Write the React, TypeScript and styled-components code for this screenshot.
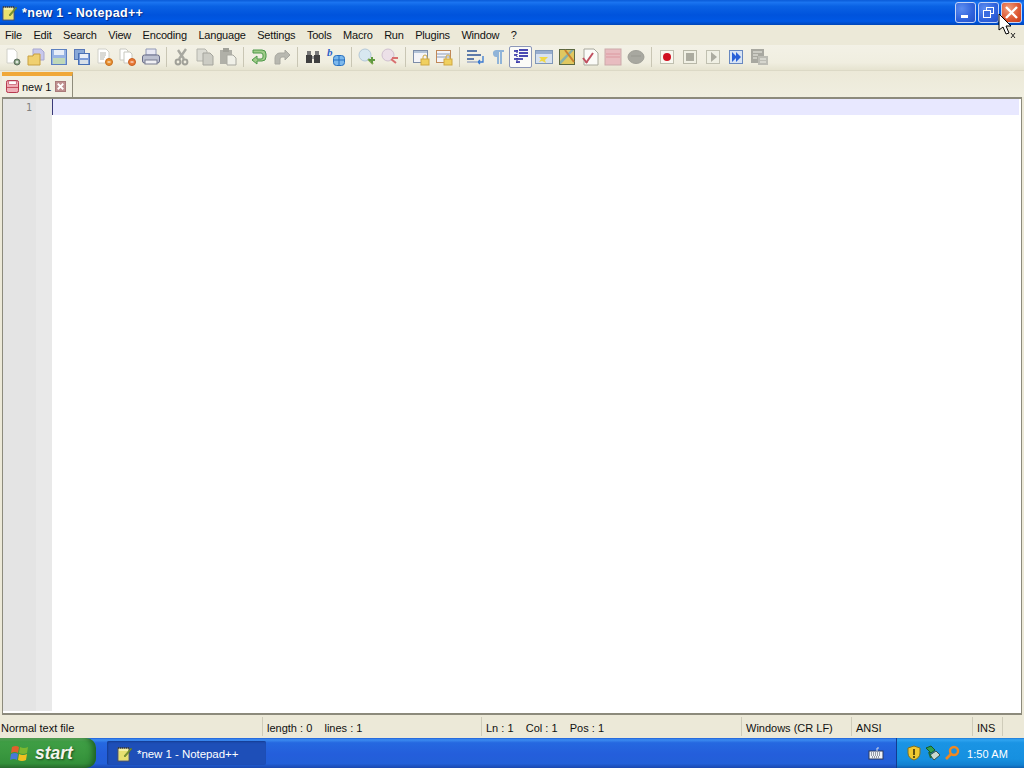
import React from "react";
import styled, { createGlobalStyle } from "styled-components";

const GlobalStyle = createGlobalStyle`
  html, body {
    margin: 0;
    padding: 0;
    height: 768px;
    overflow: hidden;
    background: #ece9d8;
  }
  #root { height: 768px; }
  * { box-sizing: border-box; }
`;

const Screen = styled.div`
  width: 1024px;
  height: 768px;
  position: relative;
  display: flex;
  flex-direction: column;
  font-family: "Liberation Sans", Arial, sans-serif;
  font-size: 11px;
  color: #111;
  background: #ece9d8;
  overflow: hidden;
`;

const TitleBar = styled.div`
  height: 25px;
  flex: none;
  display: flex;
  align-items: center;
  padding: 0 2px 0 2px;
  background: linear-gradient(180deg, #0a5bd8 0%, #1a74f0 10%, #0a62e4 25%, #0053dc 60%, #0058e4 85%, #0046b8 100%);
`;

const TitleText = styled.span`
  margin-left: 4px;
  flex: 1;
  color: #fff;
  font-weight: bold;
  font-size: 12.5px;
  letter-spacing: 0.33px;
  text-shadow: 1px 1px 1px #0a2a80;
`;

const WindowButton = styled.div<{ $close?: boolean }>`
  width: 21px;
  height: 21px;
  margin-left: 2px;
  display: flex;
  align-items: center;
  justify-content: center;
  border: 1px solid #c4d4f6;
  border-radius: 3px;
  background: ${(p) =>
    p.$close
      ? "radial-gradient(circle at 35% 30%, #f0a080 0%, #de5a35 55%, #c83c18 100%)"
      : "radial-gradient(circle at 30% 30%, #5d8df0 0%, #2f62dc 60%, #2450c8 100%)"};
`;

const MenuBar = styled.div`
  height: 20px;
  flex: none;
  display: flex;
  align-items: center;
  background: #ece9d8;
`;

const MenuItem = styled.span`
  padding: 0 6.5px 0 5px;
  letter-spacing: -0.2px;
`;

const Toolbar = styled.div`
  height: 26px;
  flex: none;
  display: flex;
  align-items: center;
  padding: 0 0 2px 1px;
  background: linear-gradient(180deg, #f3f1e6 0%, #f0eee0 70%, #e6e3d0 100%);
  border-bottom: 1px solid #dcd9c6;
`;

const ToolButton = styled.div<{ $active?: boolean }>`
  width: 23px;
  height: 22px;
  flex: none;
  display: flex;
  align-items: center;
  justify-content: center;
  border-radius: 2px;
  ${(p) =>
    p.$active &&
    `
    background: #fbfbf8;
    border: 1px solid #8c97b8;
  `}
`;

const ToolSep = styled.div`
  width: 1px;
  height: 20px;
  margin: 0 3px 0 4px;
  flex: none;
  background: #c9c6b4;
`;

const TabStrip = styled.div`
  height: 26px;
  flex: none;
  display: flex;
  align-items: flex-end;
  padding-left: 2px;
  background: linear-gradient(180deg, #ece9d8 0%, #f0eee0 100%);
`;

const Tab = styled.div`
  width: 71px;
  height: 25px;
  display: flex;
  align-items: center;
  padding-left: 4px;
  background: #f1efe2;
  border-top: 4px solid #f0a838;
  border-right: 1px solid #8f8c7c;
`;

const TabLabel = styled.span`
  margin: 0 4px 0 3px;
`;

const EditorFrame = styled.div`
  flex: 1;
  display: flex;
  margin: 0 2px 0 2px;
  padding: 0 2px 2px 0;
  border-top: 2px solid #8c8a7c;
  border-left: 1px solid #8c8a7c;
  border-right: 1px solid #8c8a7c;
  border-bottom: 2px solid #8c8a7c;
  background: #fff;
`;

const Gutter = styled.div`
  width: 49px;
  flex: none;
  display: flex;
  background: #e4e4e4;
  color: #808080;
  font-family: "DejaVu Sans Mono", monospace;
  font-size: 10px;
`;

const LineNumbers = styled.div`
  width: 33px;
  padding: 3px 4px 0 0;
  text-align: right;
`;

const FoldMargin = styled.div`
  flex: 1;
  background: #e9e9e9;
`;

const CodeArea = styled.div`
  flex: 1;
  background: #fff;
`;

const CurrentLine = styled.div`
  height: 16px;
  background: #e8e8ff;
  border-left: 1px solid #3a3a78;
`;

const StatusBar = styled.div`
  height: 23px;
  flex: none;
  display: flex;
  align-items: center;
  background: #ece9d8;
`;

const StatusCell = styled.div<{ $w: number }>`
  width: ${(p) => p.$w}px;
  height: 19px;
  flex: none;
  display: flex;
  align-items: center;
  padding: 2px 0 0 4px;
  border-right: 1px solid #cfccba;
  white-space: pre;
  &:first-child { padding-left: 1px; }
`;

const Taskbar = styled.div`
  height: 30px;
  flex: none;
  display: flex;
  align-items: center;
  background: linear-gradient(180deg, #1f5fd8 0%, #3c8cf0 6%, #2568e0 16%, #245edb 55%, #2260d8 85%, #1a48b0 100%);
`;

const StartButton = styled.div`
  width: 96px;
  height: 30px;
  flex: none;
  display: flex;
  align-items: center;
  gap: 5px;
  padding-left: 10px;
  border-radius: 0 10px 10px 0;
  background: linear-gradient(180deg, #5aa65c 0%, #3f9e45 12%, #3a983f 50%, #33903a 85%, #2a6e30 100%);
  box-shadow: inset -6px 0 6px -3px #1c5c22;
  color: #f4f4ee;
  font-size: 17.5px;
  font-weight: bold;
  font-style: italic;
  text-shadow: 1px 1px 2px #1a4a1c;
`;

const TaskButton = styled.div`
  width: 159px;
  height: 24px;
  margin-left: 11px;
  flex: none;
  display: flex;
  align-items: center;
  gap: 4px;
  padding: 1px 0 0 10px;
  border-radius: 2px;
  background: #1e4fb8;
  box-shadow: inset 1px 1px 2px #153c90;
  color: #fff;
  font-size: 11.5px;
  letter-spacing: -0.05px;
`;

const TaskSpacer = styled.div`
  flex: 1;
  display: flex;
  justify-content: flex-end;
  padding-right: 12px;
`;

const Tray = styled.div`
  width: 128px;
  height: 30px;
  flex: none;
  display: flex;
  align-items: center;
  padding-left: 9px;
  gap: 3px;
  background: linear-gradient(180deg, #1e78d8 0%, #30a4f0 6%, #1a94e4 16%, #1690e0 70%, #1280d0 90%, #0e60b0 100%);
  border-left: 1px solid #123c90;
  color: #fff;
  font-size: 11px;
`;

const Clock = styled.span`
  margin-left: 4px;
  padding-top: 1px;
  letter-spacing: 0.1px;
`;

const Pointer = styled.div`
  position: absolute;
  left: 998px;
  top: 13px;
  width: 22px;
  height: 28px;
`;

const NotepadIcon = ({ size = 16 }: { size?: number }) => (
  <svg width={size} height={size} viewBox="0 0 16 16">
    <rect x="1" y="2" width="11" height="13" fill="#f4f0a8" stroke="#555" />
    <rect x="2" y="5" width="9" height="9" fill="#e8e070" />
    <path d="M1 2h11" stroke="#222" strokeDasharray="1 1" />
    <path d="M7 10L14 2l1 1-7 8z" fill="#7a9a30" stroke="#506820" strokeWidth="0.5" />
  </svg>
);

const sheet = "M4 2h7l3 3v11H4z";

const icons: Record<string, React.ReactNode> = {
  newFile: (
    <>
      <path d={sheet} fill="#fff" stroke="#d0d0c8" />
      <circle cx="14" cy="15" r="3" fill="#7c9a78" stroke="#607060" />
      <path d="M12.5 15h3M14 13.5v3" stroke="#fff" />
    </>
  ),
  open: (
    <>
      <path d="M7 2h8l3 3v8H7z" fill="#c8c8ec" stroke="#a8a8d0" />
      <path d="M2 9h5l1-2h6v11H2z" fill="#f0d070" stroke="#c8a040" />
    </>
  ),
  save: (
    <>
      <rect x="2.5" y="2.5" width="15" height="15" fill="#98b4e4" stroke="#5c80c0" />
      <rect x="5" y="3" width="10" height="5" fill="#e8eef8" />
      <rect x="4" y="11" width="12" height="6" fill="#c0d8b8" />
    </>
  ),
  saveAll: (
    <>
      <rect x="2.5" y="2.5" width="10" height="10" fill="#88a8d8" stroke="#5878b8" />
      <rect x="6.5" y="6.5" width="11" height="11" fill="#7c9cd8" stroke="#4870b4" />
      <rect x="8" y="7" width="8" height="4" fill="#e8eef8" />
      <rect x="8" y="13" width="8" height="4" fill="#d8e0e8" />
    </>
  ),
  close: (
    <>
      <path d="M3 2h8l3 3v11H3z" fill="#fff" stroke="#d0d0c8" />
      <path d="M5 6h6M5 8h6M5 10h5M5 12h4" stroke="#b4b4ac" />
      <circle cx="14" cy="15" r="3.5" fill="#e89030" stroke="#c87020" />
      <path d="M12.5 15h3" stroke="#fff" />
    </>
  ),
  closeAll: (
    <>
      <path d="M2 2h6l2 2v9H2z" fill="#fff" stroke="#c8c8c0" />
      <path d="M6 5h6l2 2v9H6z" fill="#fff" stroke="#c8c8c0" />
      <circle cx="14" cy="15" r="3.5" fill="#e87838" stroke="#c86020" />
      <path d="M12.5 15h3" stroke="#fff" />
    </>
  ),
  print: (
    <>
      <path d="M5 2h10v6H5z" fill="#e8e8f4" stroke="#9098b4" />
      <rect x="1.5" y="8" width="17" height="8" rx="2" fill="#bcc0d0" stroke="#686c88" />
      <rect x="4" y="13" width="12" height="4" fill="#f0f0f4" stroke="#787c90" />
    </>
  ),
  cut: (
    <>
      <path d="M14 2L7 12M6 3l6 9" stroke="#a8a8a0" strokeWidth="2.4" />
      <circle cx="6" cy="15" r="2.4" fill="none" stroke="#a0a098" strokeWidth="2" />
      <circle cx="13" cy="15" r="2.4" fill="none" stroke="#a0a098" strokeWidth="2" />
    </>
  ),
  copy: (
    <>
      <path d="M2 2h8l2 2v10H2z" fill="#dcdcd4" stroke="#b4b4ac" />
      <path d="M8 6h7l3 3v9H8z" fill="#ccccc4" stroke="#a4a49c" />
    </>
  ),
  paste: (
    <>
      <rect x="2" y="3" width="12" height="14" fill="#b0b0a8" />
      <rect x="5" y="1" width="6" height="4" fill="#a0a098" />
      <path d="M9 8h6l3 3v7H9z" fill="#f0f0e8" stroke="#a8a8a0" />
    </>
  ),
  undo: (
    <path
      d="M4 3h9a4 4 0 0 1 4 4v3a4 4 0 0 1-4 4H8v3l-5-4 5-4v3h4a2 2 0 0 0 2-2V8a2 2 0 0 0-2-2H4z"
      fill="#a0cc88"
      stroke="#4c9848"
    />
  ),
  redo: (
    <path
      d="M18 8l-5-5v3H8a5 5 0 0 0-5 5v6h5v-5a2 2 0 0 1 2-2h3v3z"
      fill="#b8b8b0"
      stroke="#a8a8a0"
    />
  ),
  find: (
    <>
      <rect x="3" y="8" width="6" height="8" fill="#404040" />
      <rect x="11" y="8" width="6" height="8" fill="#404040" />
      <rect x="4" y="4" width="4" height="4" fill="#787878" />
      <rect x="12" y="4" width="4" height="4" fill="#787878" />
      <rect x="9" y="9" width="2" height="3" fill="#989898" />
    </>
  ),
  replace: (
    <>
      <text x="1" y="9" fontFamily="Liberation Serif" fontStyle="italic" fontWeight="bold" fontSize="11" fill="#2a60c8">
        b
      </text>
      <rect x="7.5" y="8.5" width="11" height="10" rx="3" fill="#7cb8ec" stroke="#2870c0" />
      <path d="M13 9v9M8 13h10" stroke="#2870c0" />
    </>
  ),
  zoomIn: (
    <>
      <circle cx="8" cy="8" r="6" fill="#d8e8f0" stroke="#b4c8d8" />
      <path d="M11 12l5 5" stroke="#80a850" strokeWidth="2" />
      <path d="M12 13h6M15 10v6" stroke="#609a40" strokeWidth="2" />
    </>
  ),
  zoomOut: (
    <>
      <circle cx="8" cy="8" r="6" fill="#ece0e8" stroke="#d0c0d0" />
      <path d="M11 12l5 4" stroke="#d87070" strokeWidth="2" />
      <path d="M12 11h6" stroke="#d87070" strokeWidth="2" />
    </>
  ),
  syncV: (
    <>
      <rect x="2.5" y="3.5" width="14" height="12" fill="#f4f4f8" stroke="#7c8ca8" />
      <rect x="3" y="4" width="13" height="2" fill="#b4c4d8" />
      <rect x="10" y="12" width="8" height="6" fill="#f0d060" stroke="#d0a840" />
      <path d="M12 12V10a2 2 0 0 1 4 0v2" fill="none" stroke="#d0a840" />
    </>
  ),
  syncH: (
    <>
      <rect x="2.5" y="3.5" width="14" height="12" fill="#f4f4f8" stroke="#c08858" />
      <path d="M3 7h13M3 10h13" stroke="#8c9cb8" />
      <rect x="10" y="12" width="8" height="6" fill="#f0d060" stroke="#d0a840" />
      <path d="M12 12V10a2 2 0 0 1 4 0v2" fill="none" stroke="#d0a840" />
    </>
  ),
  wrap: (
    <>
      <path d="M2 4h10M2 8h14M2 12h7" stroke="#2c5498" strokeWidth="1.3" />
      <path d="M2 15h10" stroke="#90a0c0" strokeWidth="1.3" />
      <path d="M18 9v6h-5m2-2l-2 2 2 2" fill="none" stroke="#3878d0" strokeWidth="1.3" />
    </>
  ),
  pilcrow: (
    <path d="M8 3h8v2h-2v12h-2V5h-1v12H9v-7a3.5 3.5 0 0 1-1-7z" fill="#90b4d8" />
  ),
  indent: (
    <>
      <path d="M6 3v14" stroke="#0a0a8c" strokeDasharray="1 1" />
      <path d="M8 3h9M8 6h9M8 9h9" stroke="#10109c" strokeWidth="1.6" />
      <path d="M3 4h4M3 12h9M5 15h4M3 8h3" stroke="#2020a0" strokeWidth="1.4" />
    </>
  ),
  lang: (
    <>
      <rect x="1.5" y="3.5" width="17" height="13" fill="#d8e2f0" stroke="#8098b8" />
      <rect x="2" y="4" width="16" height="3" fill="#98aed0" />
      <path d="M5 10h9l-3 3 1 3-4-2-3 1 2-3z" fill="#f0d848" />
    </>
  ),
  map: (
    <>
      <rect x="2.5" y="2.5" width="15" height="15" fill="#e0c860" stroke="#5c6840" />
      <path d="M3 14L14 3h3L4 17H3z" fill="#88b0a8" />
      <path d="M8 3l9 12" stroke="#c88030" strokeWidth="2" />
    </>
  ),
  doc: (
    <>
      <path d="M4 2h10l4 4v12H4z" fill="#fbfbf8" stroke="#a8a89c" />
      <path d="M6 16L13 6" stroke="#c05060" strokeWidth="2" />
      <path d="M3 11l4 5" stroke="#c05060" strokeWidth="2" />
    </>
  ),
  folder: (
    <>
      <rect x="2" y="2" width="16" height="16" fill="#e8bcc0" stroke="#ccaaaa" />
      <path d="M3 7h14M3 10h14" stroke="#dc98a0" />
    </>
  ),
  bubble: (
    <>
      <ellipse cx="10" cy="10" rx="8" ry="6.5" fill="#a8a8a0" stroke="#a0a098" />
      <path d="M5 9h10" stroke="#989890" />
    </>
  ),
  record: (
    <>
      <rect x="3.5" y="3.5" width="13" height="13" fill="#f8f8f0" stroke="#c0c0b0" />
      <circle cx="10" cy="10" r="4" fill="#d01020" />
    </>
  ),
  stop: (
    <>
      <rect x="3.5" y="3.5" width="13" height="13" fill="#f0f0e4" stroke="#b8b8a8" />
      <rect x="6" y="6" width="8" height="8" fill="#acaca0" />
    </>
  ),
  play: (
    <>
      <rect x="3.5" y="3.5" width="13" height="13" fill="#f0f0e4" stroke="#c0c0b0" />
      <path d="M8 5l6 5-6 5z" fill="#acaca0" />
    </>
  ),
  playMany: (
    <>
      <rect x="3.5" y="3.5" width="13" height="13" fill="#d8e4f4" stroke="#6888c0" />
      <path d="M6 5l5 5-5 5zM10 5l5 5-5 5z" fill="#2860d8" />
    </>
  ),
  saveMacro: (
    <>
      <rect x="2" y="2" width="13" height="14" fill="#a8a8a0" />
      <rect x="9" y="9" width="10" height="9" fill="#bcbcb4" />
      <path d="M4 5h9M4 8h5M4 11h4M11 12h6M11 15h6" stroke="#f0f0e8" />
    </>
  ),
};

type ToolEntry = { icon: string; active?: boolean } | "sep";

const tools: ToolEntry[] = [
  { icon: "newFile" },
  { icon: "open" },
  { icon: "save" },
  { icon: "saveAll" },
  { icon: "close" },
  { icon: "closeAll" },
  { icon: "print" },
  "sep",
  { icon: "cut" },
  { icon: "copy" },
  { icon: "paste" },
  "sep",
  { icon: "undo" },
  { icon: "redo" },
  "sep",
  { icon: "find" },
  { icon: "replace" },
  "sep",
  { icon: "zoomIn" },
  { icon: "zoomOut" },
  "sep",
  { icon: "syncV" },
  { icon: "syncH" },
  "sep",
  { icon: "wrap" },
  { icon: "pilcrow" },
  { icon: "indent", active: true },
  { icon: "lang" },
  { icon: "map" },
  { icon: "doc" },
  { icon: "folder" },
  { icon: "bubble" },
  "sep",
  { icon: "record" },
  { icon: "stop" },
  { icon: "play" },
  { icon: "playMany" },
  { icon: "saveMacro" },
];

const menus = ["File", "Edit", "Search", "View", "Encoding", "Language", "Settings", "Tools", "Macro", "Run", "Plugins", "Window", "?"];

const statusCells: [string, number][] = [
  ["Normal text file", 263],
  ["length : 0    lines : 1", 219],
  ["Ln : 1    Col : 1    Pos : 1", 260],
  ["Windows (CR LF)", 110],
  ["ANSI", 121],
  ["INS", 30],
];

const App = () => (
  <Screen>
    <GlobalStyle />
    <TitleBar>
      <NotepadIcon />
      <TitleText>*new 1 - Notepad++</TitleText>
      <WindowButton>
        <svg width="13" height="13" viewBox="0 0 13 13">
          <rect x="2" y="9" width="7" height="3" fill="#fff" />
        </svg>
      </WindowButton>
      <WindowButton>
        <svg width="13" height="13" viewBox="0 0 13 13" fill="none" stroke="#fff">
          <rect x="4.5" y="1.5" width="7" height="6" />
          <rect x="1.5" y="4.5" width="7" height="7" fill="#3a6ce0" />
        </svg>
      </WindowButton>
      <WindowButton $close>
        <svg width="15" height="15" viewBox="0 0 15 15">
          <path d="M2 2l11 11M13 2L2 13" stroke="#fff" strokeWidth="2.4" />
        </svg>
      </WindowButton>
    </TitleBar>

    <MenuBar>
      {menus.map((m) => (
        <MenuItem key={m}>{m}</MenuItem>
      ))}
    </MenuBar>

    <Toolbar>
      {tools.map((t, i) =>
        t === "sep" ? (
          <ToolSep key={i} />
        ) : (
          <ToolButton key={i} $active={t.active}>
            <svg width="20" height="20" viewBox="0 0 20 20">
              {icons[t.icon]}
            </svg>
          </ToolButton>
        )
      )}
    </Toolbar>

    <TabStrip>
      <Tab>
        <svg width="13" height="13" viewBox="0 0 14 14">
          <rect x="0.5" y="0.5" width="13" height="13" rx="2" fill="#f0b0b8" stroke="#b02840" />
          <rect x="3" y="1" width="8" height="4" fill="#fff" stroke="#b02840" strokeWidth="0.6" />
          <path d="M1 8h12" stroke="#c04050" />
        </svg>
        <TabLabel>new 1</TabLabel>
        <svg width="11" height="11" viewBox="0 0 12 12">
          <rect width="12" height="12" fill="#a87878" />
          <rect x="1" y="1" width="10" height="10" fill="#c09090" />
          <path d="M3 3l6 6M9 3l-6 6" stroke="#fff" strokeWidth="2" />
        </svg>
      </Tab>
    </TabStrip>

    <EditorFrame>
      <Gutter>
        <LineNumbers>1</LineNumbers>
        <FoldMargin />
      </Gutter>
      <CodeArea>
        <CurrentLine />
      </CodeArea>
    </EditorFrame>

    <StatusBar>
      {statusCells.map(([text, w]) => (
        <StatusCell key={text} $w={w}>
          {text}
        </StatusCell>
      ))}
    </StatusBar>

    <Taskbar>
      <StartButton>
        <svg width="20" height="20" viewBox="0 0 20 20">
          <path d="M2 4q4-2 7 0l-1 6q-3-2-7 0z" fill="#e0602c" />
          <path d="M10 4q4 2 8 0l-1 6q-4 2-8 0z" fill="#7cb830" />
          <path d="M1 11q4-2 7 0l-1 6q-3-2-7 0z" fill="#4878d8" />
          <path d="M9 11q4 2 8 0l-1 6q-4 2-8 0z" fill="#f0c020" />
        </svg>
        start
      </StartButton>
      <TaskButton>
        <NotepadIcon />
        *new 1 - Notepad++
      </TaskButton>
      <TaskSpacer>
        <svg width="16" height="16" viewBox="0 0 16 16">
          <rect x="1" y="6" width="14" height="8" fill="#eef2f8" stroke="#2a3a60" />
          <path d="M3 8h10M3 10h10M4 12h8" stroke="#404858" strokeDasharray="1 1" />
          <path d="M9 6V3h2" stroke="#d0d8e8" fill="none" />
        </svg>
      </TaskSpacer>
      <Tray>
        <svg width="16" height="16" viewBox="0 0 16 16">
          <path d="M8 1l6 2v5q0 5-6 7-6-2-6-7V3z" fill="#f0c830" stroke="#807020" />
          <path d="M8 4v6M8 11v2" stroke="#302808" strokeWidth="1.5" />
        </svg>
        <svg width="16" height="16" viewBox="0 0 16 16">
          <path d="M1 3l5-2 4 4-4 3z" fill="#30a050" stroke="#185828" />
          <path d="M5 10l6-4 4 4-6 5z" fill="#c8d8d0" stroke="#385048" />
          <path d="M4 7l2 6" stroke="#206838" strokeWidth="2" />
        </svg>
        <svg width="16" height="16" viewBox="0 0 16 16" fill="none">
          <circle cx="10" cy="6" r="4" stroke="#f08820" strokeWidth="2.4" />
          <path d="M7 9l-5 5" stroke="#f08820" strokeWidth="2.6" />
        </svg>
        <Clock>1:50 AM</Clock>
      </Tray>
    </Taskbar>

    <Pointer>
      <svg width="22" height="28" viewBox="0 0 22 28">
        <path d="M1 1v16l4-3 3 7 3-1-3-7h5z" fill="#fff" stroke="#000" />
        <path d="M13 19l4 5M17 19l-4 5" stroke="#222" transform="translate(0 1)" />
      </svg>
    </Pointer>
  </Screen>
);

export default App;
